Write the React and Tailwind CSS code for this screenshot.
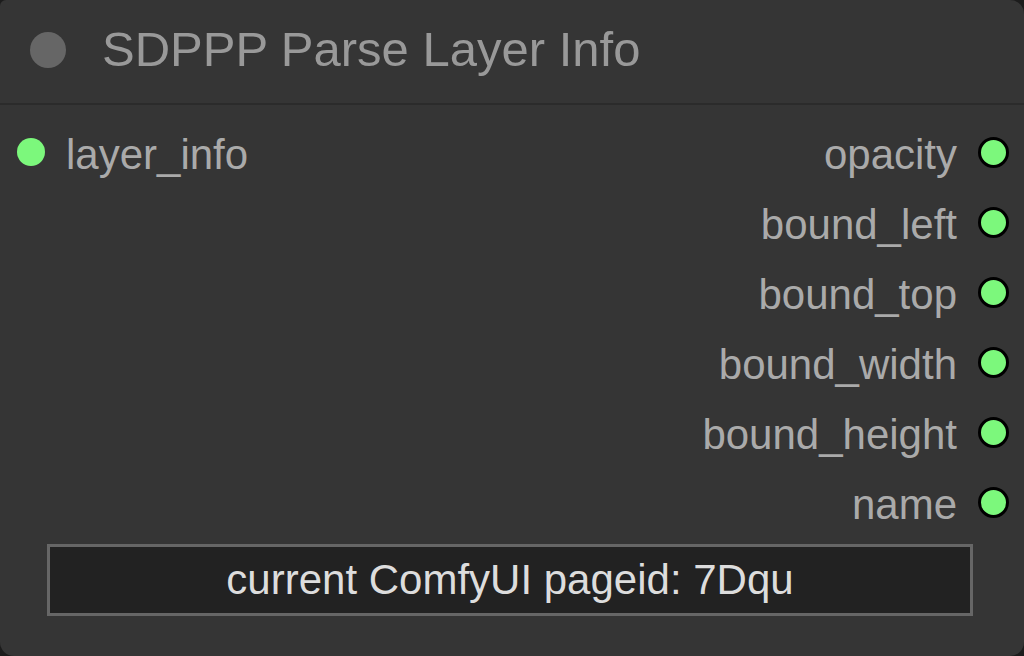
import React from 'react'

const outputs = ['opacity', 'bound_left', 'bound_top', 'bound_width', 'bound_height', 'name']

function OutDot() {
  return <span className="w-[31px] h-[31px] rounded-full bg-[#7cf87c] border-[3px] border-black shrink-0 mb-[6px]" />
}

export default function App() {
  return (
    <div className="w-[1024px] h-[656px] bg-[#1c1c1c] font-['Liberation_Sans',Arial,sans-serif] overflow-hidden">
      <div className="w-full h-full bg-[#353535] rounded-[14px] rounded-tl-[6px] flex flex-col">
        <div className="h-[105px] flex items-center border-b-2 border-[#2b2b2b] shrink-0">
          <span className="ml-[30px] w-[36px] h-[36px] rounded-full bg-[#666] mb-[4px]" />
          <span className="ml-[36px] text-[49px] text-[#999] leading-none mb-[4px]">SDPPP Parse Layer Info</span>
        </div>

        <div className="pt-[15px] flex flex-col">
          {outputs.map((o, i) => (
            <div key={o} className="h-[70px] flex items-center">
              {i === 0 && (
                <div className="flex items-center ml-[17px]">
                  <span className="w-[28px] h-[28px] rounded-full bg-[#7cf87c] mb-[6px]" />
                  <span className="ml-[21px] text-[42px] text-[#aaa] leading-none">layer_info</span>
                </div>
              )}
              <div className="ml-auto flex items-center mr-[15px]">
                <span className="text-[42px] text-[#aaa] leading-none">{o}</span>
                <span className="w-[21px]" />
                <OutDot />
              </div>
            </div>
          ))}
        </div>

        <div className="mt-[4px] ml-[47px] mr-[51px] h-[72px] border-[3px] border-[#666] bg-[#222] flex items-center justify-center">
          <span className="text-[42px] text-[#ddd] leading-none">current ComfyUI pageid: 7Dqu</span>
        </div>
      </div>
    </div>
  )
}
